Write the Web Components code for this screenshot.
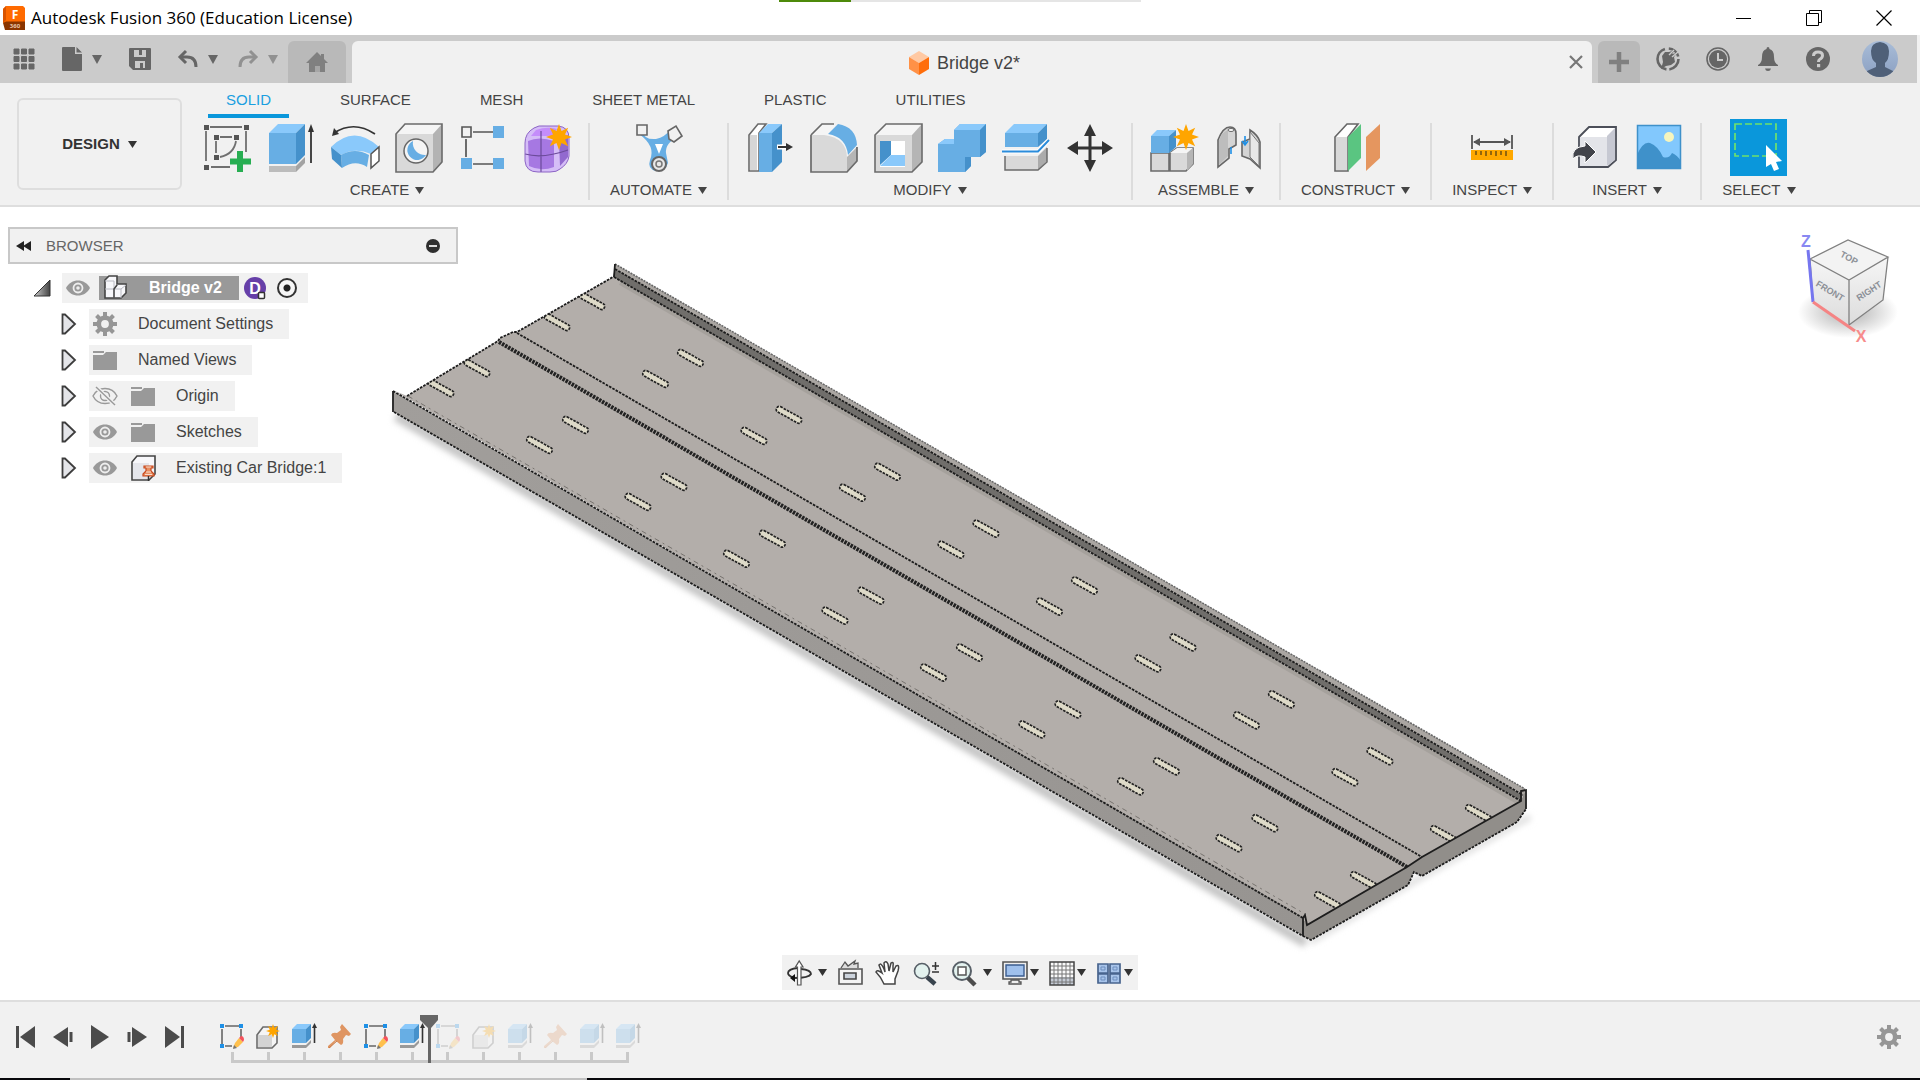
<!DOCTYPE html>
<html lang="en">
<head>
<meta charset="utf-8">
<title>Autodesk Fusion 360 (Education License)</title>
<style>
	html, body { margin: 0; height: 100%; }
	body {
		background: #fff;
		color: #444;
		font: 15px/20px "Liberation Sans", Arial, sans-serif;
	}
</style>
</head>
<body>
<fusion-app></fusion-app>

<script>
const BLUE = '#67aee4';
const BLUE_TOP = '#8ac9fb';
const BLUE_SIDE = '#4591cb';

// star badge used on the "new" icons
const star = (x, y, r) => {
	let points = [];
	for (let i = 0; i < 16; i++) {
		const a = (i * Math.PI) / 8;
		const d = i % 2 ? r * 0.5 : r;
		points.push((x + d * Math.sin(a)).toFixed(1) + ',' + (y - d * Math.cos(a)).toFixed(1));
	}
	return `<polygon points="${points.join(' ')}" fill="#ffa500"/>`;
};

const gear = (color) => {
	let teeth = '';
	for (let i = 0; i < 8; i++) {
		teeth += `<rect x="11" y="1" width="4" height="6" transform="rotate(${i * 45} 13 13)"/>`;
	}
	return `<g fill="${color}">${teeth}</g><circle cx="13" cy="13" r="6.2" fill="none" stroke="${color}" stroke-width="4.6"/>`;
};

const timelineSketch = `
	<path d="M6 3H20M3 6V21M22 6V16M6 23H13" stroke="#666" stroke-width="1.6" fill="none"/>
	<path d="M1 1h4v4h-4zM20 1h4v4h-4zM1 21h4v4h-4z" fill="#1e90e6"/>
	<path d="M14 25L16 20L20 15L24 19L19 24z" fill="#ffc04d"/>
	<path d="M20 15l2-2q3 0 3 4l-1 2z" fill="#f5525c"/><path d="M14 26l1-4 3 3z" fill="#777"/>`;

// name: [width, height, markup]
const ICONS = {
	caret: [10, 9, '<path d="M0 0H10L5 9z" fill="currentColor"/>'],
	drop: [9, 7, '<path d="M0 0H9L4.500 7z" fill="currentColor"/>'],
	app: [22, 24, `
		<path d="M3 0H20L22 2V17H0V3z" fill="#ff6a00"/><path d="M0 3L3 0V14L0 17z" fill="#d95400"/>
		<path d="M0 17L3 15.500H22V24H2z" fill="#8a3500"/>
		<text x="12" y="13" text-anchor="middle" font-size="12" font-weight="700" fill="#fff">F</text>
		<text x="12" y="22" text-anchor="middle" font-size="6" font-weight="700" fill="#e7c6ad">360</text>`],
	minimize: [16, 16, '<path d="M0 8.5H15" stroke="#000"/>'],
	restore: [16, 16, '<path d="M.5 3.5h12v12h-12zM3.5 3V.5h12v12H13" fill="none" stroke="#000"/>'],
	closeWindow: [16, 16, '<path d="M.5 .5L15.500 15.500M15.500 .5L.5 15.500" stroke="#000" stroke-width="1.2"/>'],
	grid: [22, 22, '<path d="M1 1h5v5h-5zM8.500 1h5v5h-5zM16 1h5v5h-5zM1 8.500h5v5h-5zM8.500 8.500h5v5h-5zM16 8.500h5v5h-5zM1 16h5v5h-5zM8.500 16h5v5h-5zM16 16h5v5h-5z" fill="#666" stroke="#666"/>'],
	file: [20, 24, '<path d="M1 0H13V7H20V23a1 1 0 0 1-1 1H1a1 1 0 0 1-1-1V1a1 1 0 0 1 1-1zM14.500 0L20 5.500H14.500z" fill="#666"/>'],
	save: [22, 22, '<path fill-rule="evenodd" d="M1 0H21a1 1 0 0 1 1 1V21a1 1 0 0 1-1 1H4L0 18V1a1 1 0 0 1 1-1zM5 2V9H17V2zM6 13V20H16V13z" fill="#666"/><path d="M10 1h3v6h-3zM11 15h3v6h-3z" fill="#666"/>'],
	undo: [20, 18, '<path d="M2 7H9Q18 7 18 17" fill="none" stroke="currentColor" stroke-width="3"/><path d="M8 1L2 7L8 13" fill="none" stroke="currentColor" stroke-width="3"/>'],
	redo: [20, 18, '<path d="M18 7H11Q2 7 2 17" fill="none" stroke="currentColor" stroke-width="3"/><path d="M12 1L18 7L12 13" fill="none" stroke="currentColor" stroke-width="3"/>'],
	home: [22, 20, '<path d="M11 0L15 4V2H18V7L22 11H19V20H14V14H9V20H3V11H0z" fill="#808080"/><path d="M9 14h5v6h-5z" fill="#a6a6a6"/>'],
	docCube: [22, 24, '<path d="M11 0L21 6L11 12L1 6z" fill="#ffc9a3"/><path d="M1 6L11 12V24L1 18z" fill="#ff9146"/><path d="M21 6L11 12V24L21 18z" fill="#ff6d0a"/>'],
	close: [14, 14, '<path d="M1 1L13 13M13 1L1 13" stroke="#777" stroke-width="2.200"/>'],
	plus: [20, 20, '<path d="M10 0V20M0 10H20" stroke="#808080" stroke-width="4.500"/>'],
	extensions: [24, 24, '<circle cx="12" cy="12" r="10.500" fill="none" stroke="#666" stroke-width="2.600" stroke-dasharray="15 3 28 4 13 3"/><path d="M6 9L9 5L13 5L19 3L16 7L21 6L18 10L19 15L15 18L10 19L5 22L7 15z" fill="#666"/><path d="M13 8l5-5M16 10l6-5" stroke="#ccc" stroke-width="1.400"/>'],
	clock: [24, 24, '<circle cx="12" cy="12" r="11" fill="none" stroke="#666" stroke-width="1.600"/><circle cx="12" cy="12" r="9" fill="#666"/><path d="M12 6V13H17" fill="none" stroke="#ccc" stroke-width="2"/>'],
	bell: [24, 24, '<path d="M12 0Q13.500 0 13.500 2Q18 3 18 10Q18 16 22 18V19H2V18Q6 16 6 10Q6 3 10.500 2Q10.500 0 12 0zM9 21.500H15Q14.500 24 12 24Q9.500 24 9 21.500z" fill="#666"/>'],
	help: [24, 24, '<circle cx="12" cy="12" r="12" fill="#666"/><path d="M7.500 9Q7.500 5 12 5Q16.500 5 16.500 8.500Q16.500 11 13.500 12.500Q12.500 13 12.500 15" fill="none" stroke="#ccc" stroke-width="3"/><path d="M11 17h3.200v3.200h-3.200z" fill="#ccc"/>'],
	avatar: [36, 36, '<clipPath id="c"><circle cx="18" cy="18" r="18"/></clipPath><linearGradient id="g" x2="0" y2="1"><stop stop-color="#a9bdd8"/><stop offset="1" stop-color="#8ba0c2"/></linearGradient><g clip-path="url(#c)"><path d="M0 0H36V36H0z" fill="url(#g)"/><path d="M9 10Q9 2 18 1Q27 2 27 10Q27 19 23 22V26L31 30V36H5V30L14 26V22Q9 19 9 10z" fill="#4f6078"/></g>'],

	sketch: [48, 50, '<path d="M7 4H39M3 8V38M43 8V29M8 44H27M17 14H29M13 18V30M33 18Q31 31 17 34" fill="none" stroke="#707070" stroke-width="1.800"/><path d="M1 2h5v5h-5zM41 2h5v5h-5zM1 42h5v5h-5zM11 12h5v5h-5zM31 12h5v5h-5zM11 32h5v5h-5z" fill="#555"/><path d="M37 28v21M27 38.500h21" stroke="#27ae52" stroke-width="6"/>'],
	extrude: [48, 50, `<path d="M2 10H29V41H2z" fill="${BLUE}"/><path d="M2 10L11 1H38L29 10z" fill="${BLUE_TOP}"/><path d="M29 10L38 1V32L29 41z" fill="${BLUE_SIDE}"/><path d="M2 43H29V49H2z" fill="#bcbcbc"/><path d="M29 43L38 34V40L29 49z" fill="#a3a3a3"/><path d="M44 5V40" stroke="#333" stroke-width="1.800"/><path d="M44 1L47 9H41z" fill="#333"/>`],
	revolve: [48, 50, `<path d="M0 24Q23 1 48 24L40 31Q24 24 10 32z" fill="${BLUE_TOP}"/><path d="M10 32Q24 24 38 32L36 44Q24 36 11 45z" fill="${BLUE}"/><path d="M0 24L10 32L11 45L1 36z" fill="${BLUE_SIDE}"/><path d="M40 31L48 24V38L40 45z" fill="#fff" stroke="#555" stroke-width="1.500"/><path d="M44 11Q23-3 3 10" fill="none" stroke="#333" stroke-width="1.700"/><path d="M1 13L3 5L8 11z" fill="#333"/>`],
	hole: [48, 50, `<path d="M1 11L10 1H47V39L38 49H1z" fill="#f5f5f5"/><path d="M1 11H38V49H1z" fill="#d9d9d9"/><path d="M38 11L47 1V39L38 49z" fill="#b3b3b3"/><path d="M1 11L10 1H47V39L38 49H1z" fill="none" stroke="#6b6b6b" stroke-width="1.600"/><circle cx="21" cy="28" r="12" fill="#f4f4f4" stroke="#666" stroke-width="1.500"/><path d="M18 18A10 10 0 1 0 31 32A12 12 0 0 1 18 18z" fill="${BLUE}"/>`],
	pattern: [48, 50, `<path d="M14 9H34M7 16V34M14 41H34" stroke="#555" stroke-width="1.700"/><path d="M3 4h9v10h-9z" fill="#f1f1f1" stroke="#555" stroke-width="1.600"/><path d="M34 3h11v12h-11zM2 35h11v11h-11zM34 35h11v11h-11z" fill="${BLUE}"/>`],
	form: [48, 50, `<path d="M2 20Q2 10 11 5Q15 2 23 3H35Q46 4 46 15V33Q45 41 37 46Q34 49 27 49H15Q3 49 2 38z" fill="#d5bdf7"/><path d="M5 18Q16 13 31 18V44Q18 49 6 43z" fill="#a678e2"/><path d="M36 18Q42 14 45 12V34L37 43z" fill="#9269cf"/><path d="M13 7Q24 3 34 6L29 13H8z" fill="#c48dfa"/><path d="M2 31Q20 36 45 27M18 8V49" fill="none" stroke="#6c4b9b" stroke-width="1.200"/><path d="M2 20Q2 10 11 5Q15 2 23 3H35Q46 4 46 15V33Q45 41 37 46Q34 49 27 49H15Q3 49 2 38z" fill="none" stroke="#8c64c5"/>` + star(36, 14, 13)],
	automate: [48, 50, `<path d="M9 9Q10 17 22 16Q31 14 36 7L44 14Q31 20 32 30L34 40Q31 49 22 48Q13 46 16 37Q22 23 5 11z" fill="${BLUE}"/><path d="M21 21H29L25 31z" fill="#fff"/><path d="M3 2h10v10h-10z" fill="#f1f1f1" stroke="#666" stroke-width="1.600"/><path d="M36 9L44 4L50 14L42 20L37 17z" fill="#f1f1f1" stroke="#666" stroke-width="1.600" transform="translate(-2 -1)"/><circle cx="25" cy="41" r="7" fill="#e8e8e8" stroke="#666" stroke-width="2"/><circle cx="25" cy="41" r="3" fill="none" stroke="#777" stroke-width="1.500"/>`],
	pressPull: [48, 50, `<path d="M3 12L12 1H20L13 10V48H3z" fill="#fff" stroke="#6b6b6b" stroke-width="1.600"/><path d="M4 12H11V47H4z" fill="#d6d6d6"/><path d="M13 10H26V49H13z" fill="${BLUE}"/><path d="M13 10L22 1H36L26 10z" fill="${BLUE_TOP}"/><path d="M26 10L36 1V39L26 49z" fill="${BLUE_SIDE}"/><path d="M31 24H43" stroke="#fff" stroke-width="5"/><path d="M32 24H43" stroke="#333" stroke-width="2"/><path d="M47 24L40 20V28z" fill="#333"/>`],
	fillet: [48, 50, `<path d="M1 12L12 1H24L47 26V38L37 49H1z" fill="#f5f5f5"/><path d="M1 12H14Q37 15 37 35V49H1z" fill="#d9d9d9"/><path d="M37 34L47 24V38L37 49z" fill="#b5b5b5"/><path d="M1 12L12 1H24M47 24V38L37 49H1V12" fill="none" stroke="#6b6b6b" stroke-width="1.700"/><path d="M18 11L28 1Q46 4 47 22L38 32Q36 14 18 11z" fill="${BLUE}"/>`],
	shell: [48, 50, `<path d="M1 12L12 1H48V39L38 49H1z" fill="#f5f5f5"/><path d="M1 12H38V49H1z" fill="#d9d9d9"/><path d="M38 12L48 1V39L38 49z" fill="#b5b5b5"/><path d="M1 12L12 1H48V39L38 49H1z" fill="none" stroke="#6b6b6b" stroke-width="1.600"/><path d="M6 18H31V44H6z" fill="#fff"/><path d="M6 18H17V32L6 42z" fill="${BLUE_SIDE}"/><path d="M17 32H31V43H6z" fill="${BLUE_TOP}"/>`],
	combine: [48, 50, `<path d="M0 21L7 16H16V7L22 1H48V29L42 34H33V43L27 49H0z" fill="${BLUE}"/><path d="M0 21L7 16H16V21zM16 7L22 1H48L42 7z" fill="${BLUE_TOP}"/><path d="M42 7L48 1V29L42 34zM27 34H33V43L27 49z" fill="${BLUE_SIDE}"/>`],
	split: [48, 50, `<path d="M3 10H36V24H3z" fill="${BLUE}"/><path d="M3 10L12 1H45L36 10z" fill="${BLUE_TOP}"/><path d="M36 10L45 1V16L36 24z" fill="${BLUE_SIDE}"/><path d="M3 33H36V47H3z" fill="#d9d9d9"/><path d="M36 33L45 24V38L36 47z" fill="#ababab"/><path d="M3 33V47H36L45 39V25" fill="none" stroke="#6b6b6b" stroke-width="1.500"/><path d="M0 28.500H36L47 17" fill="none" stroke="#fff" stroke-width="4"/><path d="M0 28.500H36L47 17" fill="none" stroke="#2a8cdb" stroke-width="2"/>`],
	move: [48, 50, '<path d="M24 8V42M8 25H40" stroke="#333" stroke-width="3"/><path d="M24 1L30 13H18zM24 49L18 37H30zM1 25L12 18V32zM47 25L36 18V32z" fill="#333"/>'],
	component: [48, 50, `<path d="M1 30H19V48H1zM20 30L27 25H43V41L36 48H20z" fill="#d9d9d9" stroke="#6b6b6b" stroke-width="1.600"/><path d="M20 30L27 25H43L37 30z" fill="#f5f5f5"/><path d="M37 30L43 25V41L37 48z" fill="#b5b5b5"/><path d="M1 13H19V30H1z" fill="${BLUE}"/><path d="M1 13L7 7H26L19 13z" fill="${BLUE_TOP}"/><path d="M19 13L26 7V24L19 30z" fill="${BLUE_SIDE}"/>` + star(36, 14, 13)],
	joint: [48, 50, '<path d="M4 17Q9 4 16 4Q22 4 22 11V22L15 26V35L4 44z" fill="#d4d4d4" stroke="#666" stroke-width="1.600"/><path d="M5 17Q8 9 14 7V33L5 42z" fill="#bdbdbd"/><ellipse cx="17" cy="7" rx="3" ry="1.500" fill="#fff" stroke="#666"/><path d="M46 45L36 36L28 33V19L36 16V7Q44 12 46 19z" fill="#d4d4d4" stroke="#666" stroke-width="1.600"/><path d="M36 9V34L45 43V20z" fill="#e8e8e8" stroke="#777"/><path d="M17 24V31M31 13V21M28 18l3 4 3-4" fill="none" stroke="#1e90e6" stroke-width="1.600"/>'],
	planes: [48, 50, '<path d="M3 14L15 1H26L16 14V48H3z" fill="#fff" stroke="#666" stroke-width="1.600"/><path d="M4 14H15V47H4z" fill="#d9d9d9"/><path d="M16 14L29 1V35L16 48z" fill="#5ac581"/><path d="M34 14L48 1V35L34 48z" fill="#e5965f"/>'],
	measure: [48, 50, '<path d="M4 12V26M44 12V26M6 19H42" stroke="#555" stroke-width="1.800"/><path d="M5 19l7-4v8zM43 19l-7-4v8z" fill="#555"/><path d="M3 27H45V37H3z" fill="#ffa800"/><path d="M8 28v4M13 28v4M18 28v5M23 28v4M28 28v5M33 28v4M38 28v5" stroke="#705010" stroke-width="1.500"/>'],
	insert: [48, 50, '<path d="M8 14L18 4H45V37L37 44H8z" fill="#fff" stroke="#4c4f59" stroke-width="1.800"/><path d="M9 14H36V43H9z" fill="#e3e4e9"/><path d="M36 13L44 5V37L36 43z" fill="#c6c8d2"/><path d="M2 36Q0 24 14 23V18L25 29L14 40V34Q6 31 2 36z" fill="#42444b" stroke="#fff"/>'],
	canvas: [48, 50, '<path d="M2 2H46V46H2z" fill="#82c8fd"/><path d="M2 32Q8 18 15 20Q23 23 28 34Q34 36 37 30Q42 32 46 38V46H2z" fill="#3f91ca"/><circle cx="34" cy="14" r="5" fill="#f6f5bd"/><path d="M2.500 2.500H45.500V45.500H2.500z" fill="none" stroke="#3f91ca" stroke-width="1.500"/>'],
	select: [57, 57, '<path d="M0 0H57V57H0z" fill="#0a97db"/><path d="M5 5H46V37H5z" fill="none" stroke="#6fe26b" stroke-width="1.700" stroke-dasharray="7 3"/><path d="M36 26L52 42L46 43L49 50L44 52L41 45L36 48z" fill="#fff"/>'],

	rewind: [16, 10, '<path d="M8 0V10L0 5zM15 0V10L7 5z" fill="#222"/>'],
	collapse: [14, 14, '<circle cx="7" cy="7" r="7" fill="#2f2f2f"/><path d="M3 7H11" stroke="#ddd" stroke-width="2"/>'],
	expanded: [18, 18, '<linearGradient id="t"><stop stop-color="#ccc"/><stop offset="1" stop-color="#444"/></linearGradient><path d="M1 17L17 1V17z" fill="url(#t)" stroke="#333"/>'],
	closed: [16, 22, '<path d="M1.500 1.500H4L14 11L4 20.500H1.500z" fill="#e4e5e9" stroke="#3d3d3d" stroke-width="1.800"/>'],
	eye: [26, 26, '<path d="M1 13C6 3 20 3 25 13C20 23 6 23 1 13z" fill="#999"/><circle cx="13" cy="13" r="4.500" fill="none" stroke="#eee" stroke-width="1.800"/><circle cx="13" cy="13" r="1.800" fill="#eee"/>'],
	eyeOff: [26, 26, '<path d="M1 13C6 3 20 3 25 13C20 23 6 23 1 13z" fill="none" stroke="#999" stroke-width="1.400"/><circle cx="13" cy="13" r="4.500" fill="none" stroke="#999" stroke-width="1.400"/><path d="M4 4L23 22" stroke="#f1f1f1" stroke-width="4"/><path d="M4 4L23 22" stroke="#999" stroke-width="1.400"/>'],
	gear: [26, 26, gear('#969696')],
	folder: [26, 26, '<path d="M1 4H12V6H1zM1 8H11L14 5H25V23H1z" fill="#999"/>'],
	assembly: [26, 26, '<path d="M2 5L6 1H14V9H23V18L18 23H2z" fill="#f7f7fa" stroke="#444" stroke-width="1.600"/><path d="M2 6H11V14H2M11 14V23M11 14L15 10M18 14V23M11 14H18L23 10" fill="none" stroke="#b9bac2"/><path d="M11 23V14L14 10" fill="none" stroke="#444" stroke-width="1.500"/>'],
	badge: [24, 24, '<circle cx="12" cy="12" r="11" fill="#663fa8"/><text x="12" y="18" text-anchor="middle" font-size="16" font-weight="700" fill="#fff">D</text><rect x="15.500" y="16.500" width="6" height="6" rx="1" fill="#fff" stroke="#333" stroke-width="1.500"/>'],
	pinned: [26, 26, '<path d="M2 7L7 1H25V19L19 25H2z" fill="#f7f7fa" stroke="#444" stroke-width="1.600"/><path d="M3 8H19V24H3z" fill="#e5e6eb"/><path d="M14 11H23V13H21V16L24 19V21H13V19L16 16V13H14z" fill="#e88f62" stroke="#c8481d" stroke-width="1.200"/><path d="M16 12h5M16 17h5M15 19.500h7" stroke="#f7dccd"/><path d="M18.500 21V26" stroke="#333" stroke-width="1.500"/>'],

	orbit: [26, 26, '<path d="M12 8Q2 9 2 13Q2 16 8 17.500M15 9Q25 10 25 14Q23 18 8 18" fill="none" stroke="#333" stroke-width="1.800"/><path d="M11.500 7V25H15V7H17L13.200 1L9.500 7z" fill="#fff" stroke="#555" stroke-width="1.200"/><path d="M4 18L9 14V22z" fill="#111"/>'],
	lookAt: [26, 26, '<path d="M2 9H25V24H2z" fill="#f4f4f4" stroke="#555" stroke-width="1.600"/><path d="M4 8L8 2L11 6L18 1L17 4L21 3V8" fill="#ddd" stroke="#555" stroke-width="1.300"/><path d="M7 13H19V19H7z" fill="#ccd3dc" stroke="#444" stroke-width="1.600"/>'],
	hand: [26, 26, '<path d="M9 24Q6 17 1 12Q2 9 7 13L4 5Q6 2 9 9L10 12L9 3Q11 0 13 4L14 11L16 3Q19 1 18 6V12L21 6Q25 4 23 11L20 19V24z" fill="#fff" stroke="#444" stroke-width="1.500"/>'],
	zoom: [28, 26, '<circle cx="9" cy="11" r="7.500" fill="#e3f2ef" stroke="#586068" stroke-width="1.600"/><path d="M14 17L22 24" stroke="#39444e" stroke-width="4.500"/><path d="M19 6H26M22.500 2V10M19 12H26" stroke="#333" stroke-width="1.500"/>'],
	fit: [26, 26, '<circle cx="11" cy="11" r="9" fill="#e3f2ef" stroke="#586068" stroke-width="2"/><path d="M7 7H15V15H7z" fill="#fff" stroke="#555" stroke-width="1.500"/><path d="M17 18L24 25" stroke="#4d4d4d" stroke-width="4.500"/>'],
	display: [26, 26, '<path d="M1 2H25V19H1z" fill="#eee" stroke="#555" stroke-width="1.600"/><path d="M4 5H22V16H4z" fill="#9fc0ec" stroke="#3b5c8f" stroke-width="1.400"/><path d="M9 20H17V22H19V24H7V22H9z" fill="#eee" stroke="#555" stroke-width="1.300"/>'],
	gridView: [26, 26, '<path d="M1 2H25V25H1z" fill="#fafafa"/><path d="M1 17H25V25H1z" fill="#c5cbd5"/><path d="M5 2V25M9 2V25M13 2V25M17 2V25M21 2V25M1 6H25M1 10H25M1 14H25M1 18H25M1 22H25" stroke="#777"/><path d="M1 2H25V25H1z" fill="none" stroke="#444" stroke-width="1.500"/>'],
	views: [26, 26, '<path d="M2 4H12V13H2zM14 4H24V13H14zM2 14H12V23H2zM14 14H24V23H14z" fill="#a8c4ea" stroke="#48648e" stroke-width="1.700"/><path d="M5 7h4v3h-4zM17 7h4v3h-4zM5 17h4v3h-4zM17 17h4v3h-4z" fill="none" stroke="#6f8fbf"/>'],

	first: [20, 24, '<path d="M1.500 1V23" stroke="#4b4b4b" stroke-width="3"/><path d="M19 1V23L4 12z" fill="#4b4b4b"/>'],
	back: [20, 24, '<path d="M15 2V22L0 12z" fill="#4b4b4b"/><path d="M18 7V17" stroke="#4b4b4b" stroke-width="3"/>'],
	play: [20, 24, '<path d="M1 0L19 12L1 24z" fill="#4b4b4b"/>'],
	forward: [20, 24, '<path d="M5 2V22L20 12z" fill="#4b4b4b"/><path d="M2 7V17" stroke="#4b4b4b" stroke-width="3"/>'],
	last: [20, 24, '<path d="M18.500 1V23" stroke="#4b4b4b" stroke-width="3"/><path d="M1 1V23L16 12z" fill="#4b4b4b"/>'],
	tlSketch: [26, 26, timelineSketch],
	tlComponent: [26, 26, '<path d="M2 12L8 4H22V20L17 25H2z" fill="#f5f5f5" stroke="#6b6b6b" stroke-width="1.600"/><path d="M3 12H17V24H3z" fill="#d3d3d3"/>' + star(18, 8, 7)],
	tlExtrude: [26, 26, `<path d="M1 6H15V20H1z" fill="${BLUE}"/><path d="M1 6L6 1H20L15 6z" fill="${BLUE_TOP}"/><path d="M15 6L20 1V15L15 20z" fill="${BLUE_SIDE}"/><path d="M1 22H15V25H1zM15 22L20 17V20L15 25z" fill="#999"/><path d="M23.500 3V20" stroke="#333" stroke-width="1.600"/><path d="M23.500 0L26 5H21z" fill="#333"/>`],
	tlPin: [26, 26, '<path d="M15 1L24 11L22 13L19 12L16 16Q17 21 14 22L9 18L3 25L1 25L1 23L8 17L4 12Q5 9 10 10L14 7L13 4z" fill="#df9562"/><path d="M10 18L2 25" stroke="#c97d4c"/>'],
	marker: [18, 48, '<path d="M0 0H18V5L11 13V48H8V13L0 5z" fill="#666"/>'],
};

const BUTTON = /*css*/ `
	button {
		display: flex;
		align-items: center;
		justify-content: center;
		margin: 0;
		padding: 0;
		border: 0;
		background: none;
		color: inherit;
		font: inherit;
	}
`;

class AppIcon extends HTMLElement {
	constructor() {
		super().attachShadow({ mode: 'open' });
	}

	static get observedAttributes() {
		return ['name'];
	}

	attributeChangedCallback(attr, oldValue, newValue) {
		const [width, height, markup] = ICONS[newValue];
		this.shadowRoot.innerHTML = /*html*/ `
			<style>
				:host { display: inline-block; flex: none; }
				svg { display: block; overflow: visible; }
			</style>
			<svg width="${width}" height="${height}" viewBox="0 0 ${width} ${height}" aria-hidden="true">${markup}</svg>`;
	}
}

class TitleBar extends HTMLElement {
	constructor() {
		super().attachShadow({ mode: 'open' });
		this.shadowRoot.innerHTML = /*html*/ `
			<style>
				${BUTTON}
				:host {
					display: flex;
					align-items: center;
					position: relative;
					height: 35px;
					padding: 0 28px 0 3px;
					box-sizing: border-box;
					background: #fff;
					color: #000;
					font: 17px/24px "Open Sans", "Noto Sans", sans-serif;
				}
				.title { flex: 1; margin-left: 6px; }
				.window { display: flex; gap: 54px; }
				/* capture progress line, lies over the window's top edge */
				.strip {
					position: absolute;
					top: 0;
					left: 50%;
					width: 362px;
					height: 2px;
					margin-left: -181px;
					background: linear-gradient(90deg, #4d8a0a 72px, #e5e5e5 72px);
				}
			</style>
			<div class="strip"></div>
			<app-icon name="app"></app-icon>
			<span class="title"><slot></slot></span>
			<div class="window">
				<button aria-label="Minimize"><app-icon name="minimize"></app-icon></button>
				<button aria-label="Restore"><app-icon name="restore"></app-icon></button>
				<button aria-label="Close"><app-icon name="closeWindow"></app-icon></button>
			</div>`;
	}
}

class DocumentBar extends HTMLElement {
	constructor() {
		super().attachShadow({ mode: 'open' });
		this.shadowRoot.innerHTML = /*html*/ `
			<style>
				${BUTTON}
				:host { display: flex; height: 48px; border-right: 3px solid #f1f1f1; background: #cbcbcb; color: #666; }
				.quick { display: flex; align-items: center; gap: 27px; padding: 0 10px 0 13px; }
				.quick button { gap: 10px; }
				.history { display: flex; gap: 20px; }
				.redo { color: #919191; }
				.home, .add { align-self: flex-end; height: 42px; border-radius: 6px 6px 0 0; background: #b9b9b9; }
				.home { width: 58px; margin-right: 6px; }
				.add { width: 42px; margin-left: 6px; }
				.tab {
					display: flex;
					flex: 1;
					align-items: center;
					align-self: flex-end;
					height: 42px;
					padding: 0 8px;
					border-radius: 6px 6px 0 0;
					background: #f1f1f1;
				}
				.name {
					display: flex;
					flex: 1;
					align-items: center;
					justify-content: center;
					gap: 7px;
					padding-top: 2px;
					color: #444;
					font-size: 18px;
				}
				.tab button { width: 16px; }
				.account { display: flex; align-items: center; gap: 26px; padding: 0 19px 0 16px; }
				.avatar { margin-left: 6px; }
			</style>
			<div class="quick">
				<button aria-label="Data panel"><app-icon name="grid"></app-icon></button>
				<button aria-label="File"><app-icon name="file"></app-icon><app-icon name="caret"></app-icon></button>
				<button aria-label="Save"><app-icon name="save"></app-icon></button>
				<div class="history">
					<button aria-label="Undo"><app-icon name="undo"></app-icon><app-icon name="caret"></app-icon></button>
					<button class="redo" aria-label="Redo"><app-icon name="redo"></app-icon><app-icon name="caret"></app-icon></button>
				</div>
			</div>
			<button class="home" aria-label="Home"><app-icon name="home"></app-icon></button>
			<div class="tab">
				<span class="name"><app-icon name="docCube"></app-icon><slot></slot></span>
				<button aria-label="Close document"><app-icon name="close"></app-icon></button>
			</div>
			<button class="add" aria-label="New design"><app-icon name="plus"></app-icon></button>
			<div class="account">
				<button aria-label="Extensions"><app-icon name="extensions"></app-icon></button>
				<button aria-label="Job status"><app-icon name="clock"></app-icon></button>
				<button aria-label="Notifications"><app-icon name="bell"></app-icon></button>
				<button aria-label="Help"><app-icon name="help"></app-icon></button>
				<button class="avatar" aria-label="Account"><app-icon name="avatar"></app-icon></button>
			</div>`;
	}
}

class ToolGroup extends HTMLElement {
	connectedCallback() {
		const tools = this.getAttribute('tools').split(' ');
		this.attachShadow({ mode: 'open' }).innerHTML = /*html*/ `
			<style>
				${BUTTON}
				:host { display: flex; flex: none; color: #333; }
				.body { display: flex; flex-direction: column; align-items: center; gap: 4px; }
				.tools { display: flex; padding: 0 9px; }
				.tools button { width: 64px; height: 57px; }
				.label { gap: 6px; padding: 0 20px; line-height: 20px; color: #444; white-space: nowrap; }
				.rule { width: 2px; margin: 4px 0 0; background: #dcdcdc; }
				:host([last]) .rule { display: none; }
			</style>
			<div class="body">
				<div class="tools">
					${tools.map((tool) => `<button aria-label="${tool}"><app-icon name="${tool}"></app-icon></button>`).join('')}
				</div>
				<button class="label"><slot></slot><app-icon name="drop"></app-icon></button>
			</div>
			<div class="rule"></div>`;
	}
}

class RibbonBar extends HTMLElement {
	constructor() {
		super().attachShadow({ mode: 'open' });
		this.shadowRoot.innerHTML = /*html*/ `
			<style>
				${BUTTON}
				:host {
					display: flex;
					height: 124px;
					box-sizing: border-box;
					border-bottom: 2px solid #dedede;
					background: #f1f1f1;
				}
				.workspace {
					flex: none;
					gap: 8px;
					width: 165px;
					height: 92px;
					margin: 15px 4px 0 17px;
					border: 2px solid #dedede;
					border-radius: 6px;
					color: #333;
					font-weight: 700;
				}
				.main { flex: 1; }
				.tabs { display: flex; gap: 33px; height: 36px; padding-left: 22px; }
				.tabs button { height: 35px; padding: 2px 18px 0; border-bottom: 4px solid transparent; box-sizing: border-box; white-space: nowrap; }
				.tabs button[aria-selected="true"] { border-color: #0a97db; color: #1a9fe0; }
				.groups { display: flex; }
			</style>
			<button class="workspace">DESIGN<app-icon name="drop"></app-icon></button>
			<div class="main">
				<div class="tabs" role="tablist">
					<button role="tab" aria-selected="true">SOLID</button>
					<button role="tab">SURFACE</button>
					<button role="tab">MESH</button>
					<button role="tab">SHEET METAL</button>
					<button role="tab">PLASTIC</button>
					<button role="tab">UTILITIES</button>
				</div>
				<div class="groups">
					<tool-group tools="sketch extrude revolve hole pattern form">CREATE</tool-group>
					<tool-group tools="automate">AUTOMATE</tool-group>
					<tool-group tools="pressPull fillet shell combine split move">MODIFY</tool-group>
					<tool-group tools="component joint">ASSEMBLE</tool-group>
					<tool-group tools="planes">CONSTRUCT</tool-group>
					<tool-group tools="measure">INSPECT</tool-group>
					<tool-group tools="insert canvas">INSERT</tool-group>
					<tool-group tools="select" last>SELECT</tool-group>
				</div>
			</div>`;
	}
}

class TreeRow extends HTMLElement {
	connectedCallback() {
		const icons = this.getAttribute('icons').split(' ');
		this.attachShadow({ mode: 'open' }).innerHTML = /*html*/ `
			<style>
				${BUTTON}
				:host { display: flex; padding-left: 53px; font-size: 16px; }
				.toggle { width: 28px; justify-content: flex-start; }
				.row { display: flex; align-items: center; gap: 12px; height: 30px; padding: 0 16px 0 3px; background: #f1f1f1; }
				.text { margin-left: 8px; white-space: nowrap; }
			</style>
			<button class="toggle" aria-label="Expand"><app-icon name="closed"></app-icon></button>
			<div class="row">
				${icons.map((icon) => `<app-icon name="${icon}"></app-icon>`).join('')}
				<span class="text"><slot></slot></span>
			</div>`;
	}
}

class TreeRoot extends HTMLElement {
	constructor() {
		super().attachShadow({ mode: 'open' });
		this.shadowRoot.innerHTML = /*html*/ `
			<style>
				${BUTTON}
				:host { display: flex; padding-left: 25px; font-size: 16px; }
				.toggle { width: 29px; justify-content: flex-start; }
				.row { display: flex; align-items: center; height: 30px; padding: 0 11px 0 3px; background: #f1f1f1; }
				.name {
					display: flex;
					align-items: center;
					gap: 20px;
					height: 24px;
					margin: 0 4px 0 8px;
					padding: 0 17px 0 4px;
					background: #999;
					color: #fff;
					font-weight: 700;
				}
				input {
					appearance: none;
					box-sizing: border-box;
					width: 20px;
					height: 20px;
					margin: 0 0 0 10px;
					border: 2px solid #333;
					border-radius: 50%;
					background: radial-gradient(#222 3px, #f6f6f6 4px);
				}
			</style>
			<button class="toggle" aria-label="Collapse"><app-icon name="expanded"></app-icon></button>
			<div class="row">
				<app-icon name="eye"></app-icon>
				<span class="name"><app-icon name="assembly"></app-icon><slot></slot></span>
				<app-icon name="badge"></app-icon>
				<input type="radio" checked aria-label="Activate component">
			</div>`;
	}
}

class BrowserPanel extends HTMLElement {
	constructor() {
		super().attachShadow({ mode: 'open' });
		this.shadowRoot.innerHTML = /*html*/ `
			<style>
				${BUTTON}
				:host { display: flex; flex-direction: column; gap: 6px; width: 450px; }
				header {
					display: flex;
					align-items: center;
					gap: 14px;
					height: 37px;
					margin-bottom: 3px;
					padding: 0 16px 0 6px;
					box-sizing: border-box;
					border: 2px solid #c8c8c8;
					background: #f1f1f1;
					color: #666;
				}
				header span { flex: 1; }
			</style>
			<header>
				<button aria-label="Hide panel"><app-icon name="rewind"></app-icon></button>
				<span>BROWSER</span>
				<button aria-label="Display settings"><app-icon name="collapse"></app-icon></button>
			</header>
			<tree-root>Bridge v2</tree-root>
			<tree-row icons="gear">Document Settings</tree-row>
			<tree-row icons="folder">Named Views</tree-row>
			<tree-row icons="eyeOff folder">Origin</tree-row>
			<tree-row icons="eye folder">Sketches</tree-row>
			<tree-row icons="eye pinned">Existing Car Bridge:1</tree-row>`;
	}
}

class BridgeModel extends HTMLElement {
	constructor() {
		super().attachShadow({ mode: 'open' });
		// drain slots, four rows of ten
		const rows = [[592, 301], [557, 322], [477, 368], [441, 388]];
		let slots = '';
		for (const [x, y] of rows) {
			for (let i = 0; i < 10; i++) {
				slots += `<use href="#slot" x="${(x + i * 98.5).toFixed(1)}" y="${(y + i * 56.9).toFixed(1)}"/>`;
			}
		}
		this.shadowRoot.innerHTML = /*html*/ `
			<style>
				:host { display: block; min-height: 0; }
				svg { display: block; width: 100%; height: 100%; }
				.edge { fill: none; stroke: #1c1c1c; stroke-width: 1.8; stroke-dasharray: 2.6 1.2; }
			</style>
			<svg viewBox="0 207 1920 793" role="img" aria-label="Bridge model">
				<defs>
					<g id="slot">
						<rect x="-14" y="-3" width="28" height="6" rx="2.500" transform="rotate(29)" fill="#dedac8" stroke="#222" stroke-width="1.700" stroke-dasharray="2.600 1.100"/>
					</g>
					<filter id="soft"><feGaussianBlur stdDeviation="3"/></filter>
					<linearGradient id="front" x1="0" x2="1"><stop stop-color="#a19e9b"/><stop offset="1" stop-color="#979491"/></linearGradient>
					<clipPath id="deck"><path d="M407 396L498 341L517 332L613 277L1521 801L1422 857L1407 867L1307 925L399 398z"/></clipPath>
				</defs>
				<path d="M396 416L1306 943" fill="none" stroke="#c4c4c4" stroke-width="10" filter="url(#soft)"/>
				<path d="M1310 942L1420 878L1517 824L1530 817" fill="none" stroke="#ddd" stroke-width="6" filter="url(#soft)"/>
				<path d="M1307 924L1407 867L1422 857L1521 801L1525 790L1526 809L1517 822L1422 876L1414 872L1408 885L1311 940L1303 936L1303 918z" fill="#918e8a"/>
				<path d="M395 391L407 396L498 341L500 338L513 332L517 332L613 277L1521 801L1422 857L1407 867L1307 925L1303 918z" fill="#b3aeaa"/>
				<path d="M500 340L517 332L1422 857L1407 867z" fill="#b0aba7"/>
				<path d="M615 268L1523 794L1521 801L613 277z" fill="#706e6b"/>
				<path d="M615 264L1525 789V793L1522 795L615 269z" fill="#aaa6a2"/>
				<path d="M393 391L1303 917V936L1311 940L394 412z" fill="url(#front)"/>
				<path d="M620 283L1519 803" stroke="#999590" stroke-width="4" opacity=".5"/>
				<g clip-path="url(#deck)">${slots}</g>
				<path class="edge" d="M407 396L498 341L500 338L513 332L517 332L613 277"/>
				<path class="edge" d="M615 269L1523 795M614 277L1521 801M517 333L1422 857"/>
				<path d="M499 342L1407 867" stroke="#222" stroke-width="4" stroke-dasharray="2.500 1"/>
				<path d="M615 264L1525 789" stroke="#666" stroke-width="1.500" stroke-dasharray="2 1"/>
				<path class="edge" d="M393 391L1303 918M394 412L1303 936L1311 940L1408 885L1414 872L1422 876L1517 822L1526 809"/>
				<path d="M408 396L1305 914" stroke="#77736f" stroke-dasharray="5 4 2 4"/>
				<path d="M393 391V412M1303 918V936M1303 918L1305 915L1307 925L1407 867L1422 857L1521 801V791L1526 790V809M615 264L614 277" fill="none" stroke="#1d1d1d" stroke-width="1.800"/>
			</svg>`;
	}
}

class ViewCube extends HTMLElement {
	constructor() {
		super().attachShadow({ mode: 'open' });
		this.shadowRoot.innerHTML = /*html*/ `
			<style>
				:host { display: block; }
				svg { display: block; overflow: visible; }
			</style>
			<svg width="100" height="120" viewBox="0 0 100 120" role="img" aria-label="View cube">
				<defs>
					<radialGradient id="shade"><stop stop-color="#777" stop-opacity=".6"/><stop offset="1" stop-color="#777" stop-opacity="0"/></radialGradient>
					<linearGradient id="face" x2="0" y2="1"><stop stop-color="#f6f6f6"/><stop offset="1" stop-color="#dcdcdc"/></linearGradient>
				</defs>
				<ellipse cx="48" cy="82" rx="50" ry="26" fill="url(#shade)"/>
				<path d="M10 29L49 50V95L13 72z" fill="url(#face)"/>
				<path d="M88 27L49 50V95L83 70z" fill="url(#face)"/>
				<path d="M48 10L88 27L49 50L10 29z" fill="#f3f3f3"/>
				<path d="M10 29L48 10L88 27L49 50zM49 50V95L83 70L88 27M10 29L13 72" fill="none" stroke="#808080" stroke-width="1.300"/>
				<path d="M8 20L13 72" stroke="#7676ef" stroke-width="3"/>
				<path d="M13 72L55 101" stroke="#f58484" stroke-width="3"/>
				<g font-weight="700" font-size="9" fill="#8c9097" text-anchor="middle">
					<text x="49" y="31" transform="rotate(28 49 28)">TOP</text>
					<text x="30" y="64" transform="rotate(31 30 61)">FRONT</text>
					<text x="69" y="64" transform="rotate(-33 69 61)">RIGHT</text>
				</g>
				<g font-weight="700" font-size="16" text-anchor="middle">
					<text x="6" y="17" fill="#8888f2">Z</text>
					<text x="61" y="112" fill="#f78c8c">X</text>
				</g>
			</svg>`;
	}
}

class NavBar extends HTMLElement {
	constructor() {
		super().attachShadow({ mode: 'open' });
		this.shadowRoot.innerHTML = /*html*/ `
			<style>
				${BUTTON}
				:host { display: flex; align-items: center; gap: 10px; height: 35px; padding: 0 5px 0 4px; background: #f1f1f1; color: #333; }
				button { gap: 2px; }
				.wide { gap: 6px; }
				.plain { padding: 0 2px; }
			</style>
			<button class="wide" aria-label="Orbit"><app-icon name="orbit"></app-icon><app-icon name="drop"></app-icon></button>
			<button aria-label="Look at"><app-icon name="lookAt"></app-icon></button>
			<button class="plain" aria-label="Pan"><app-icon name="hand"></app-icon></button>
			<button aria-label="Zoom"><app-icon name="zoom"></app-icon></button>
			<button class="wide" aria-label="Fit"><app-icon name="fit"></app-icon><app-icon name="drop"></app-icon></button>
			<button aria-label="Display settings"><app-icon name="display"></app-icon><app-icon name="drop"></app-icon></button>
			<button aria-label="Grid and snaps"><app-icon name="gridView"></app-icon><app-icon name="drop"></app-icon></button>
			<button aria-label="Viewports"><app-icon name="views"></app-icon><app-icon name="drop"></app-icon></button>`;
	}
}

class TimeLine extends HTMLElement {
	constructor() {
		super().attachShadow({ mode: 'open' });
		const kinds = ['tlSketch', 'tlComponent', 'tlExtrude', 'tlPin', 'tlSketch', 'tlExtrude'];
		const features = [...kinds, 'tlSketch', 'tlComponent', 'tlExtrude', 'tlPin', 'tlExtrude', 'tlExtrude'];
		const item = (kind, i) => `<button class="${i < kinds.length ? '' : 'off'}" aria-label="Feature ${i + 1}"><app-icon name="${kind}"></app-icon></button>`;
		this.shadowRoot.innerHTML = /*html*/ `
			<style>
				${BUTTON}
				:host {
					display: flex;
					align-items: flex-start;
					height: 80px;
					box-sizing: border-box;
					padding: 21px 18px 0 16px;
					border-top: 2px solid #dedede;
					border-bottom: 2px solid #000;
					border-image: linear-gradient(90deg, #08080c 72px, #c0c0c0 72px 588px, #08080c 588px) 2;
					border-image-width: 0 0 2px;
					background: linear-gradient(#dedede 2px, #f1f1f1 2px);
					background-origin: border-box;
				}
				.player { display: flex; gap: 17px; margin: 2px 30px 0 0; }
				.history { position: relative; }
				.features { display: flex; }
				.features button { width: 36px; height: 26px; }
				.off { opacity: .25; }
				.ticks { display: flex; justify-content: space-between; height: 8px; margin: 3px 17px 0; border-bottom: 3px solid #c9c9c9; }
				.ticks i { width: 3px; background: #c9c9c9; }
				/* the marker stands over the track, after the last computed feature */
				.marker { position: absolute; top: -8px; left: 206px; }
				.settings { margin: 1px 0 0 auto; }
			</style>
			<div class="player">
				<button aria-label="Go to start"><app-icon name="first"></app-icon></button>
				<button aria-label="Step back"><app-icon name="back"></app-icon></button>
				<button aria-label="Play"><app-icon name="play"></app-icon></button>
				<button aria-label="Step forward"><app-icon name="forward"></app-icon></button>
				<button aria-label="Go to end"><app-icon name="last"></app-icon></button>
			</div>
			<div class="history">
				<div class="features">${features.map(item).join('')}</div>
				<div class="ticks">${features.map(() => '<i></i>').join('')}</div>
				<app-icon class="marker" name="marker"></app-icon>
			</div>
			<button class="settings" aria-label="Timeline settings"><app-icon name="gear"></app-icon></button>`;
	}
}

class FusionApp extends HTMLElement {
	constructor() {
		super().attachShadow({ mode: 'open' });
		this.shadowRoot.innerHTML = /*html*/ `
			<style>
				:host { display: flex; flex-direction: column; min-height: 100%; }
				/* the panels share one grid cell with the model */
				main { display: grid; flex: 1; grid-template: minmax(0, 1fr) / minmax(0, 1fr); }
				main > * { grid-area: 1 / 1; }
				browser-panel { place-self: start; margin: 20px 0 0 8px; }
				view-cube { place-self: start end; margin: 23px 20px 0 0; }
				nav-bar { place-self: end center; margin-bottom: 10px; }
			</style>
			<title-bar>Autodesk Fusion 360 (Education License)</title-bar>
			<document-bar>Bridge v2*</document-bar>
			<ribbon-bar></ribbon-bar>
			<main>
				<bridge-model></bridge-model>
				<browser-panel></browser-panel>
				<view-cube></view-cube>
				<nav-bar></nav-bar>
			</main>
			<time-line></time-line>`;
	}
}

customElements.define('app-icon', AppIcon);
customElements.define('title-bar', TitleBar);
customElements.define('document-bar', DocumentBar);
customElements.define('tool-group', ToolGroup);
customElements.define('ribbon-bar', RibbonBar);
customElements.define('tree-row', TreeRow);
customElements.define('tree-root', TreeRoot);
customElements.define('browser-panel', BrowserPanel);
customElements.define('bridge-model', BridgeModel);
customElements.define('view-cube', ViewCube);
customElements.define('nav-bar', NavBar);
customElements.define('time-line', TimeLine);
customElements.define('fusion-app', FusionApp);
</script>
</body>
</html>
